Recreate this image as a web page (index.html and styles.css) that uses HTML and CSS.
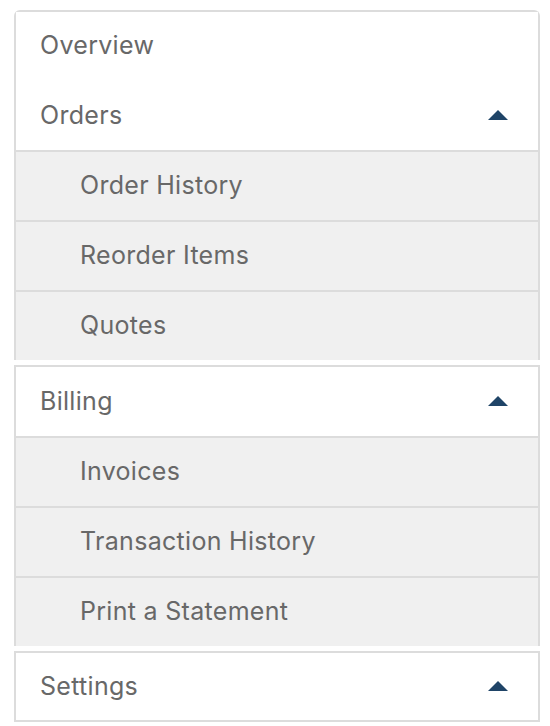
FILE: index.html
```html
<!DOCTYPE html>
<html lang="en">
<head>
    <meta charset="UTF-8">
    <meta name="viewport" content="width=device-width, initial-scale=1.0">
    <title>My Account</title>
    <link rel="stylesheet" href="styles.css">
</head>
<body>

<nav class="account-nav">
    <ul class="menu">
        <li class="menu-item first">
            <a class="menu-link" href="#">Overview</a>
        </li>
        <li class="menu-item open">
            <a class="menu-link" href="#">Orders <span class="caret"></span></a>
            <ul class="submenu">
                <li><a href="#">Order History</a></li>
                <li><a href="#">Reorder Items</a></li>
                <li><a href="#">Quotes</a></li>
            </ul>
        </li>
        <li class="menu-item group open">
            <a class="menu-link" href="#">Billing <span class="caret"></span></a>
            <ul class="submenu">
                <li><a href="#">Invoices</a></li>
                <li><a href="#">Transaction History</a></li>
                <li><a href="#">Print a Statement</a></li>
            </ul>
        </li>
        <li class="menu-item group open last">
            <a class="menu-link" href="#">Settings <span class="caret"></span></a>
        </li>
    </ul>
</nav>

</body>
</html>
```

FILE: styles.css
```css
body {
    font-family: Inter, Lato, sans-serif;
    margin: 0;
    padding: 0;
    background-color: #fff;
    overflow: hidden;
}
.account-nav {
    width: 526px;
    margin: 10px 0 0 14px;
}
.menu, .submenu {
    list-style: none;
    margin: 0;
    padding: 0;
}
.menu-item {
    border-left: 2px solid #dcdcdc;
    border-right: 2px solid #dcdcdc;
}
.menu-item.first {
    border-top: 2px solid #dcdcdc;
    border-radius: 6px 6px 0 0;
}
.menu-item.group {
    margin-top: 5px;
    border-top: 2px solid #dcdcdc;
}
.menu-item.last .menu-link {
    border-bottom: 2px solid #dcdcdc;
}
.menu-link {
    display: flex;
    align-items: center;
    justify-content: space-between;
    box-sizing: border-box;
    height: 69px;
    padding: 0 30px 2px 24px;
    font-size: 25px;
    letter-spacing: 0.3px;
    color: #686868;
    text-decoration: none;
    background-color: #fff;
}
.menu-item.first .menu-link {
    padding-bottom: 4px;
}
.caret {
    width: 0;
    height: 0;
    border-left: 10px solid transparent;
    border-right: 10px solid transparent;
    border-bottom: 10px solid #1f4467;
}
.submenu li a {
    display: flex;
    align-items: center;
    height: 66px;
    padding: 0 0 2px 64px;
    border-top: 2px solid #dcdcdc;
    background-color: #f0f0f0;
    font-size: 25px;
    letter-spacing: 0.3px;
    color: #686868;
    text-decoration: none;
}
```
